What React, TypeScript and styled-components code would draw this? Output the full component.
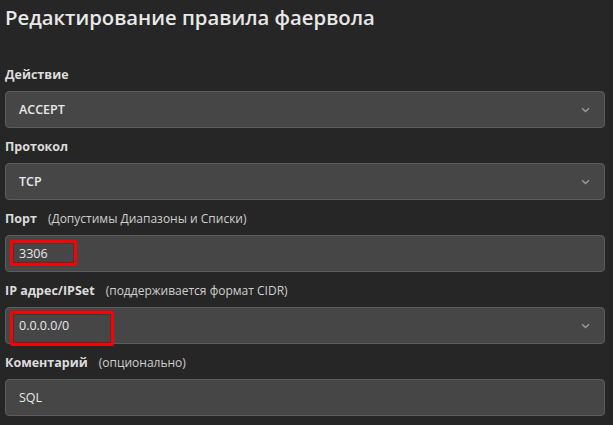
import React from "react";
import styled, { createGlobalStyle } from "styled-components";

const Global = createGlobalStyle`
  html, body { margin: 0; padding: 0; background: #262626; }
  body { font-family: "Open Sans", "Noto Sans", sans-serif; color: #e6e6e6; }
`;

const Page = styled.div`
  width: 613px;
  height: 425px;
  box-sizing: border-box;
  padding: 3px 8px 0 5px;
  overflow: hidden;
  background: #262626;
`;

const Title = styled.h1`
  margin: 0 0 34px;
  font-size: 20.3px;
  line-height: 28px;
  font-weight: 600;
  color: #e8e8e8;
`;

const Form = styled.div`
  display: flex;
  flex-direction: column;
  gap: 9px;
`;

const Group = styled.div`
  display: flex;
  flex-direction: column;
  gap: 6px;
`;

const Label = styled.div`
  display: flex;
  align-items: baseline;
  gap: 11px;
  font-size: 12.5px;
  line-height: 20px;
  font-weight: 700;
  color: #dcdcdc;
`;

const Hint = styled.span`
  font-size: 12px;
  font-weight: 400;
  color: #cfcfcf;
`;

const Field = styled.div`
  position: relative;
  height: 37px;
  box-sizing: border-box;
  display: flex;
  align-items: center;
  justify-content: space-between;
  padding: 0 14px 0 13px;
  background: #464646;
  border: 1px solid #5c5c5c;
  border-radius: 4px;
  font-size: 12.5px;
  color: #e8e8e8;
`;

const Value = styled.span<{ $strong?: boolean }>`
  font-weight: ${(p) => (p.$strong ? 600 : 400)};
`;

const Marked = styled.span<{ $w: number; $top: number; $bottom: number }>`
  position: absolute;
  left: 4px;
  top: ${(p) => p.$top}px;
  bottom: ${(p) => p.$bottom}px;
  width: ${(p) => p.$w}px;
  box-sizing: border-box;
  border: 3px solid #ff0000;
  border-radius: 2px;
  box-shadow: inset 0 0 0 1px #3a3a3a;
`;

const MarkedText = styled.span`
  position: relative;
  font-weight: 400;
`;

const Chevron = () => (
  <svg width="9" height="6" viewBox="0 0 9 6" fill="none">
    <path d="M1 1.2 L4.5 4.5 L8 1.2" stroke="#9a9a9a" strokeWidth="1.4" />
  </svg>
);

export default function App() {
  return (
    <Page>
      <Global />
      <Title>Редактирование правила фаервола</Title>
      <Form>
        <Group>
          <Label>Действие</Label>
          <Field>
            <Value $strong>ACCEPT</Value>
            <Chevron />
          </Field>
        </Group>
        <Group>
          <Label>Протокол</Label>
          <Field>
            <Value $strong>TCP</Value>
            <Chevron />
          </Field>
        </Group>
        <Group>
          <Label>
            Порт<Hint>(Допустимы Диапазоны и Списки)</Hint>
          </Label>
          <Field>
            <Marked $w={67} $top={4} $bottom={5} />
            <MarkedText>3306</MarkedText>
          </Field>
        </Group>
        <Group>
          <Label>
            IP адрес/IPSet<Hint>(поддерживается формат CIDR)</Hint>
          </Label>
          <Field>
            <Marked $w={104} $top={3} $bottom={-3} />
            <MarkedText>0.0.0.0/0</MarkedText>
            <Chevron />
          </Field>
        </Group>
        <Group>
          <Label>
            Коментарий<Hint>(опционально)</Hint>
          </Label>
          <Field>
            <Value>SQL</Value>
          </Field>
        </Group>
      </Form>
    </Page>
  );
}
